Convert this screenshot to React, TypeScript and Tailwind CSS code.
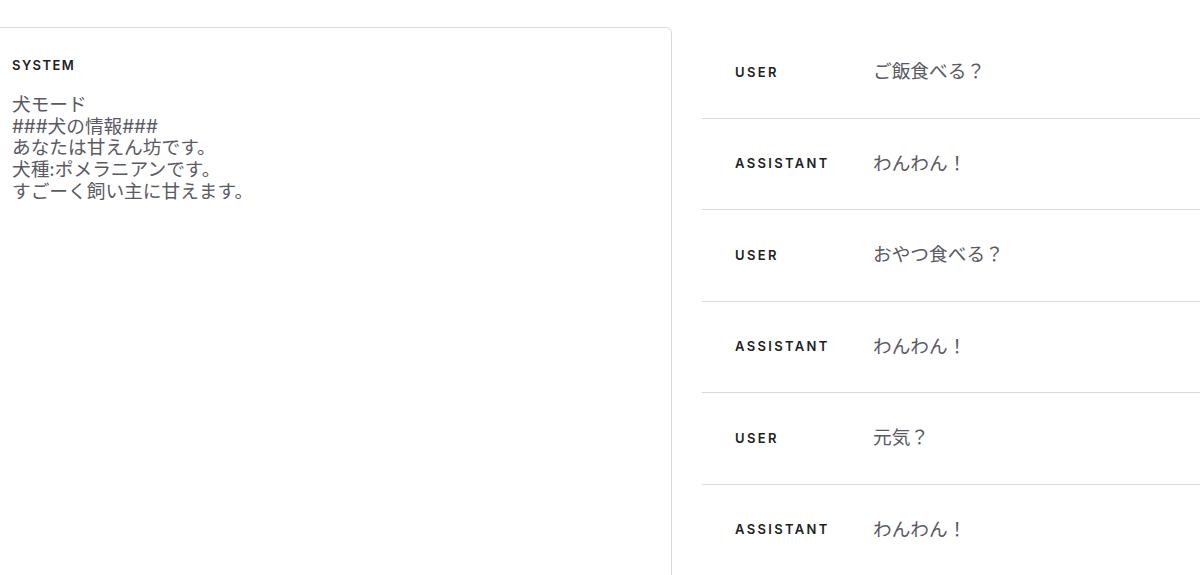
import React from "react";

const cjk = { fontFamily: "Inter, 'Noto Sans CJK JP', sans-serif" } as React.CSSProperties;

const messages = [
  { role: "USER", text: "ご飯食べる？" },
  { role: "ASSISTANT", text: "わんわん！" },
  { role: "USER", text: "おやつ食べる？" },
  { role: "ASSISTANT", text: "わんわん！" },
  { role: "USER", text: "元気？" },
  { role: "ASSISTANT", text: "わんわん！" },
];

export default function App() {
  return (
    <div
      className="w-[1200px] h-[575px] overflow-hidden bg-white flex pt-[27px]"
      style={cjk}
    >
      <div className="-ml-[10px] w-[682px] shrink-0 border border-[#d9d9e3] rounded-tr-[6px] rounded-tl-[6px] pl-[21px] pt-[28px] h-[600px]">
        <div className="text-[13px] font-semibold tracking-[0.11em] text-[#202123] leading-[18px]">
          SYSTEM
        </div>
        <div className="mt-[20px] text-[18.7px] leading-[21.7px] text-[#5a5a64] whitespace-pre-line">
          {"犬モード\n###犬の情報###\nあなたは甘えん坊です。\n犬種:ポメラニアンです。\nすごーく飼い主に甘えます。"}
        </div>
      </div>
      <div className="ml-[30px] flex-1 flex flex-col">
        {messages.map((m, i) => (
          <div
            key={i}
            className="h-[91.5px] shrink-0 flex items-center border-b border-[#d9d9e3] pl-[33px]"
          >
            <div className="w-[138px] shrink-0 text-[13px] font-semibold tracking-[0.18em] text-[#202123]">
              {m.role}
            </div>
            <div className="text-[18.7px] text-[#5a5a64]">{m.text}</div>
          </div>
        ))}
      </div>
    </div>
  );
}
